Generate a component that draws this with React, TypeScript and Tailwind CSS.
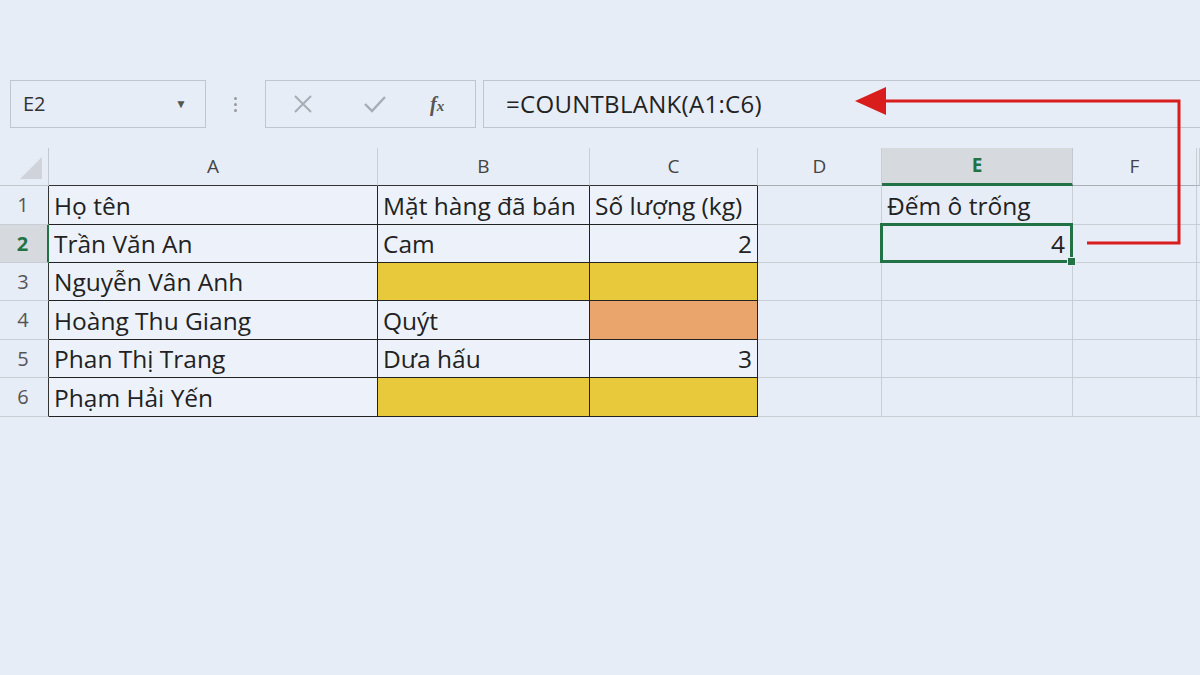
import React from "react";

const cols = ["A", "B", "C", "D", "E", "F", ""];
const widths = [329, 212, 168, 124, 191, 124, 3];

type Cell = { text?: string; right?: boolean; fill?: string };

const rows: Cell[][] = [
  [{ text: "Họ tên" }, { text: "Mặt hàng đã bán" }, { text: "Số lượng (kg)" }, {}, { text: "Đếm ô trống" }, {}, {}],
  [{ text: "Trần Văn An" }, { text: "Cam" }, { text: "2", right: true }, {}, { text: "4", right: true }, {}, {}],
  [{ text: "Nguyễn Vân Anh" }, { fill: "bg-[#e8c93c]" }, { fill: "bg-[#e8c93c]" }, {}, {}, {}, {}],
  [{ text: "Hoàng Thu Giang" }, { text: "Quýt" }, { fill: "bg-[#e9a56b]" }, {}, {}, {}, {}],
  [{ text: "Phan Thị Trang" }, { text: "Dưa hấu" }, { text: "3", right: true }, {}, {}, {}, {}],
  [{ text: "Phạm Hải Yến" }, { fill: "bg-[#e8c93c]" }, { fill: "bg-[#e8c93c]" }, {}, {}, {}, {}],
];

const rowHeights = [39, 38, 38, 39, 38, 39];

export default function App() {
  return (
    <div className="relative w-[1200px] h-[675px] overflow-hidden bg-[#e7edf7] font-['Open_Sans',sans-serif] text-[#222]">
      <div className="h-[80px]" />

      {/* Toolbar */}
      <div className="flex h-[48px]">
        <div className="ml-[10px] w-[196px] shrink-0 flex items-center justify-between border border-[#c0c6cf] pl-[12px] pr-[13px] text-[20px] text-[#333]">
          <span>E2</span>
          <span className="text-[12px] text-[#555] mr-[5px]">▼</span>
        </div>
        <div className="w-[59px] shrink-0 flex flex-col items-center justify-center gap-[3px]">
          <span className="w-[3px] h-[3px] bg-[#999] rounded-full" />
          <span className="w-[3px] h-[3px] bg-[#999] rounded-full" />
          <span className="w-[3px] h-[3px] bg-[#999] rounded-full" />
        </div>
        <div className="w-[211px] shrink-0 flex items-center border border-[#c0c6cf] pl-[26px]">
          <svg width="22" height="22" viewBox="0 0 22 22" className="mr-[48px]">
            <path d="M3 3 L19 19 M19 3 L3 19" stroke="#a8adb4" strokeWidth="2" fill="none" />
          </svg>
          <svg width="26" height="22" viewBox="0 0 26 22" className="mr-[42px]">
            <path d="M3 11 L10 18 L23 4" stroke="#a8adb4" strokeWidth="2.4" fill="none" />
          </svg>
          <span className="font-['Liberation_Serif',serif] italic font-bold text-[20px] text-[#555] leading-none">
            f<span className="text-[15px]">x</span>
          </span>
        </div>
        <div className="ml-[7px] flex-1 flex items-center border border-r-0 border-[#c0c6cf] pl-[22px] text-[24px] tracking-[0.3px] text-[#222]">
          =COUNTBLANK(A1:C6)
        </div>
      </div>

      <div className="h-[20px]" />

      {/* Column headers */}
      <div className="flex h-[38px]">
        <div className="w-[49px] shrink-0 flex items-end justify-end border-r border-b border-[#c3c8cf] pr-[6px] pb-[6px]">
          <svg width="22" height="22" viewBox="0 0 22 22">
            <path d="M22 0 L22 22 L0 22 Z" fill="#d0d4da" />
          </svg>
        </div>
        {cols.map((c, i) => {
          const sel = c === "E";
          const dark = i < 3;
          return (
            <div
              key={i}
              style={{ width: widths[i] }}
              className={`shrink-0 flex items-center justify-center text-[19px] border-r ${
                sel
                  ? "bg-[#d6dadf] text-[#217346] font-bold border-b-[3px] border-b-[#217346] border-r-[#c3c8cf]"
                  : dark
                  ? "text-[#444] border-b border-b-[#333] border-r-[#c9ced5]"
                  : "text-[#444] border-b border-b-[#a9aeb5] border-r-[#c9ced5]"
              }`}
            >
              {c}
            </div>
          );
        })}
      </div>

      {/* Rows */}
      {rows.map((row, r) => {
        const selRow = r === 1;
        return (
          <div key={r} className="flex" style={{ height: rowHeights[r] }}>
            <div
              className={`w-[49px] shrink-0 flex items-center justify-center pr-[2px] text-[20px] border-b border-b-[#c9ced5] ${
                selRow
                  ? "bg-[#d6dadf] text-[#217346] font-bold border-r-2 border-r-[#217346]"
                  : "text-[#555] border-r border-r-[#333]"
              }`}
            >
              {r + 1}
            </div>
            {row.map((cell, c) => {
              const inTable = c < 3;
              const isSel = r === 1 && c === 4;
              return (
                <div
                  key={c}
                  style={{ width: widths[c] }}
                  className={`relative shrink-0 flex items-center px-[5px] pt-[2px] text-[24.5px] leading-none border-r border-b ${
                    inTable ? "border-[#222]" : "border-[#c9ced5]"
                  } ${cell.fill ?? (inTable ? "bg-[#edf2fa]" : "")} ${cell.right ? "justify-end" : ""}`}
                >
                  <span className={`whitespace-nowrap ${isSel ? "relative z-10 mr-[2px]" : ""}`}>{cell.text}</span>
                  {isSel && (
                    <div className="absolute z-20 -top-[2px] -left-[2px] -right-[1px] -bottom-[1px] border-[3px] border-[#217346]">
                      <div className="absolute -right-[6px] -bottom-[6px] w-[9px] h-[9px] bg-[#217346] border border-[#e7edf7]" />
                    </div>
                  )}
                </div>
              );
            })}
          </div>
        );
      })}

      {/* Red arrow annotation */}
      <svg className="absolute left-0 top-0 pointer-events-none" width="1200" height="675">
        <polyline points="884,101 1179,101 1179,243 1087,243" fill="none" stroke="#d91c1c" strokeWidth="3" />
        <polygon points="855,101 886,87 886,115" fill="#d91c1c" />
      </svg>
    </div>
  );
}
